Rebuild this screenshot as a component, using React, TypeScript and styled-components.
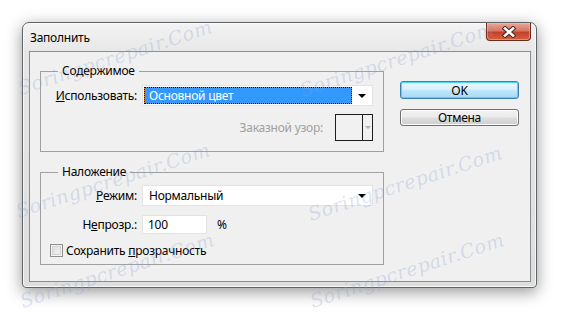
import React from 'react';
import styled, { createGlobalStyle } from 'styled-components';

const GlobalStyle = createGlobalStyle`
  html, body {
    margin: 0;
    padding: 0;
    background: #ffffff;
  }
  body {
    font-family: "Noto Sans", "Open Sans", sans-serif;
    font-size: 12px;
    letter-spacing: -0.25px;
    color: #000;
  }
`;

const Page = styled.div`
  position: relative;
  width: 561px;
  height: 312px;
  padding: 22px 0 0 22px;
  box-sizing: border-box;
  overflow: hidden;
`;

const Window = styled.div`
  width: 515px;
  height: 266px;
  box-sizing: border-box;
  border: 1px solid #5f6468;
  border-radius: 7px 7px 4px 4px;
  background: linear-gradient(180deg, #f3f3f3 0%, #e6e6e6 12%, #dedede 100%);
  box-shadow: 0 4px 16px rgba(0, 0, 0, 0.42), inset 0 0 0 1px rgba(255, 255, 255, 0.7);
  padding: 0 5px 5px 6px;
  display: flex;
  flex-direction: column;
`;

const TitleBar = styled.div`
  height: 28px;
  display: flex;
  align-items: flex-start;
  justify-content: space-between;
  flex-shrink: 0;
`;

const Title = styled.div`
  padding: 7px 0 0 1px;
  line-height: 15px;
`;

const CloseButton = styled.div`
  width: 45px;
  height: 18px;
  box-sizing: border-box;
  border: 1px solid #6b2a1e;
  border-top: none;
  border-radius: 0 0 4px 4px;
  background: linear-gradient(180deg, #e9a99b 0%, #d97663 45%, #c3412a 55%, #d5623e 100%);
  box-shadow: inset 0 0 0 1px rgba(255, 200, 190, 0.45);
  display: flex;
  align-items: center;
  justify-content: center;
`;

const Client = styled.div`
  flex: 1;
  border: 1px solid #8a8c8e;
  background: #f0f0f0;
  display: flex;
  gap: 16px;
  padding: 12px 0 0 10px;
`;

const LeftColumn = styled.div`
  width: 344px;
  display: flex;
  flex-direction: column;
  gap: 13px;
`;

const Group = styled.fieldset<{ $pt: number; $pb: number }>`
  margin: 0;
  border: 1px solid #a0a0a0;
  padding: ${(p) => p.$pt}px 0 ${(p) => p.$pb}px 0;
  min-width: 0;
`;

const Legend = styled.legend`
  margin-left: 17px;
  padding: 0 4px;
  line-height: 14px;
`;

const Row = styled.div<{ $mt?: number; $h: number }>`
  display: flex;
  align-items: center;
  height: ${(p) => p.$h}px;
  margin-top: ${(p) => p.$mt ?? 0}px;
`;

const Label = styled.div<{ $disabled?: boolean; $w?: number; $gap?: number }>`
  width: ${(p) => p.$w ?? 96}px;
  text-align: right;
  margin-right: ${(p) => p.$gap ?? 5}px;
  flex-shrink: 0;
  white-space: nowrap;
  color: ${(p) => (p.$disabled ? '#a0a0a0' : '#000')};
`;

const Combo = styled.div`
  width: 231px;
  height: 21px;
  box-sizing: border-box;
  background: #fff;
  border: 1px solid #e2e3e5;
  display: flex;
  align-items: center;
  padding: 1px;
`;

const ComboValue = styled.div<{ $selected?: boolean }>`
  flex: 1;
  height: 100%;
  box-sizing: border-box;
  display: flex;
  align-items: center;
  padding-left: 4px;
  ${(p) =>
    p.$selected
      ? `
    color: #fff;
    border: 1px dotted #000;
    background: linear-gradient(#3399ff, #3399ff) padding-box, #e58a1f border-box;
  `
      : `
    border: 1px solid transparent;
  `}
`;

const ComboArrow = styled.div`
  width: 19px;
  height: 100%;
  display: flex;
  align-items: center;
  justify-content: center;
  &::after {
    content: '';
    border-left: 4px solid transparent;
    border-right: 4px solid transparent;
    border-top: 4px solid #000;
  }
`;

const PatternBox = styled.div`
  width: 38px;
  height: 27px;
  box-sizing: border-box;
  border: 1px solid #1e1e1e;
  background: #f1f1f1;
  display: flex;
`;

const PatternSwatch = styled.div`
  width: 26px;
  border-right: 1px solid #1e1e1e;
`;

const PatternArrow = styled.div`
  flex: 1;
  display: flex;
  align-items: center;
  justify-content: center;
  &::after {
    content: '';
    border-left: 3px solid transparent;
    border-right: 3px solid transparent;
    border-top: 3px solid #b0b0b0;
  }
`;

const TextInput = styled.div`
  width: 65px;
  height: 19px;
  box-sizing: border-box;
  background: #fff;
  border: 1px solid #e2e3e5;
  padding-left: 5px;
  display: flex;
  align-items: center;
`;

const Unit = styled.span`
  margin-left: 10px;
`;

const CheckRow = styled.label`
  display: flex;
  align-items: center;
  height: 14px;
  margin: 9px 0 0 9px;
  gap: 3px;
`;

const CheckBox = styled.span`
  width: 13px;
  height: 13px;
  box-sizing: border-box;
  border: 1px solid #8e8f8f;
  background: linear-gradient(135deg, #dcdcdc 0%, #f4f4f4 100%);
  box-shadow: inset 0 0 0 1px #f4f4f4, inset 0 0 0 2px #d2d2d2;
`;

const ButtonColumn = styled.div`
  display: flex;
  flex-direction: column;
  padding-top: 17px;
  gap: 10px;
`;

const Button = styled.div<{ $default?: boolean }>`
  width: 119px;
  height: ${(p) => (p.$default ? 18 : 17)}px;
  box-sizing: border-box;
  border-radius: 3px;
  display: flex;
  align-items: center;
  justify-content: center;
  ${(p) =>
    p.$default
      ? `
    border: 1px solid #3c7fb1;
    background: linear-gradient(180deg, #eaf6fd 0%, #d9f0fc 45%, #bee6fd 55%, #a7d9f5 100%);
    box-shadow: inset 0 0 0 1px #48d8fb;
  `
      : `
    border: 1px solid #707070;
    background: linear-gradient(180deg, #f2f2f2 0%, #ebebeb 45%, #dddddd 55%, #cfcfcf 100%);
    box-shadow: inset 0 0 0 1px #fcfcfc;
  `}
`;

const Watermarks = styled.div`
  position: absolute;
  inset: 0;
  pointer-events: none;
`;

const Watermark = styled.span`
  position: absolute;
  transform: translate(-50%, -50%) rotate(-18deg);
  font-family: "DejaVu Serif", "Liberation Serif", serif;
  font-style: italic;
  font-size: 19px;
  letter-spacing: 0.5px;
  white-space: nowrap;
  color: rgba(140, 160, 210, 0.3);
`;

const marks = [
  { x: 115, y: 57 },
  { x: 397, y: 59 },
  { x: 113, y: 180 },
  { x: 405, y: 183 },
  { x: 117, y: 270 },
  { x: 407, y: 270 },
];

function CloseGlyph() {
  return (
    <svg width="16" height="12" viewBox="0 0 16 12">
      <path d="M4 2.5 L12 9.5 M12 2.5 L4 9.5" stroke="#4a2a25" strokeWidth="4.6" strokeLinecap="square" />
      <path d="M4 2.5 L12 9.5 M12 2.5 L4 9.5" stroke="#ffffff" strokeWidth="2.6" strokeLinecap="square" />
    </svg>
  );
}

export default function App() {
  return (
    <Page>
      <GlobalStyle />
      <Window>
        <TitleBar>
          <Title>Заполнить</Title>
          <CloseButton>
            <CloseGlyph />
          </CloseButton>
        </TitleBar>
        <Client>
          <LeftColumn>
            <Group $pt={7} $pb={10}>
              <Legend>Содержимое</Legend>
              <Row $h={21}>
                <Label>
                  <u>И</u>спользовать:
                </Label>
                <Combo>
                  <ComboValue $selected>Основной цвет</ComboValue>
                  <ComboArrow />
                </Combo>
              </Row>
              <Row $h={27} $mt={8}>
                <Label $disabled $w={282} $gap={12}>
                  Заказной узор:
                </Label>
                <PatternBox>
                  <PatternSwatch />
                  <PatternArrow />
                </PatternBox>
              </Row>
            </Group>
            <Group $pt={6} $pb={7}>
              <Legend>Наложение</Legend>
              <Row $h={21}>
                <Label>
                  <u>Р</u>ежим:
                </Label>
                <Combo>
                  <ComboValue>Нормальный</ComboValue>
                  <ComboArrow />
                </Combo>
              </Row>
              <Row $h={19} $mt={9}>
                <Label>
                  Н<u>е</u>прозр.:
                </Label>
                <TextInput>100</TextInput>
                <Unit>%</Unit>
              </Row>
              <CheckRow>
                <CheckBox />
                <span>
                  Сохранить <u>п</u>розрачность
                </span>
              </CheckRow>
            </Group>
          </LeftColumn>
          <ButtonColumn>
            <Button $default>OK</Button>
            <Button>Отмена</Button>
          </ButtonColumn>
        </Client>
      </Window>
      <Watermarks>
        {marks.map((m, i) => (
          <Watermark key={i} style={{ left: m.x, top: m.y }}>
            Soringpcrepair.Com
          </Watermark>
        ))}
      </Watermarks>
    </Page>
  );
}
